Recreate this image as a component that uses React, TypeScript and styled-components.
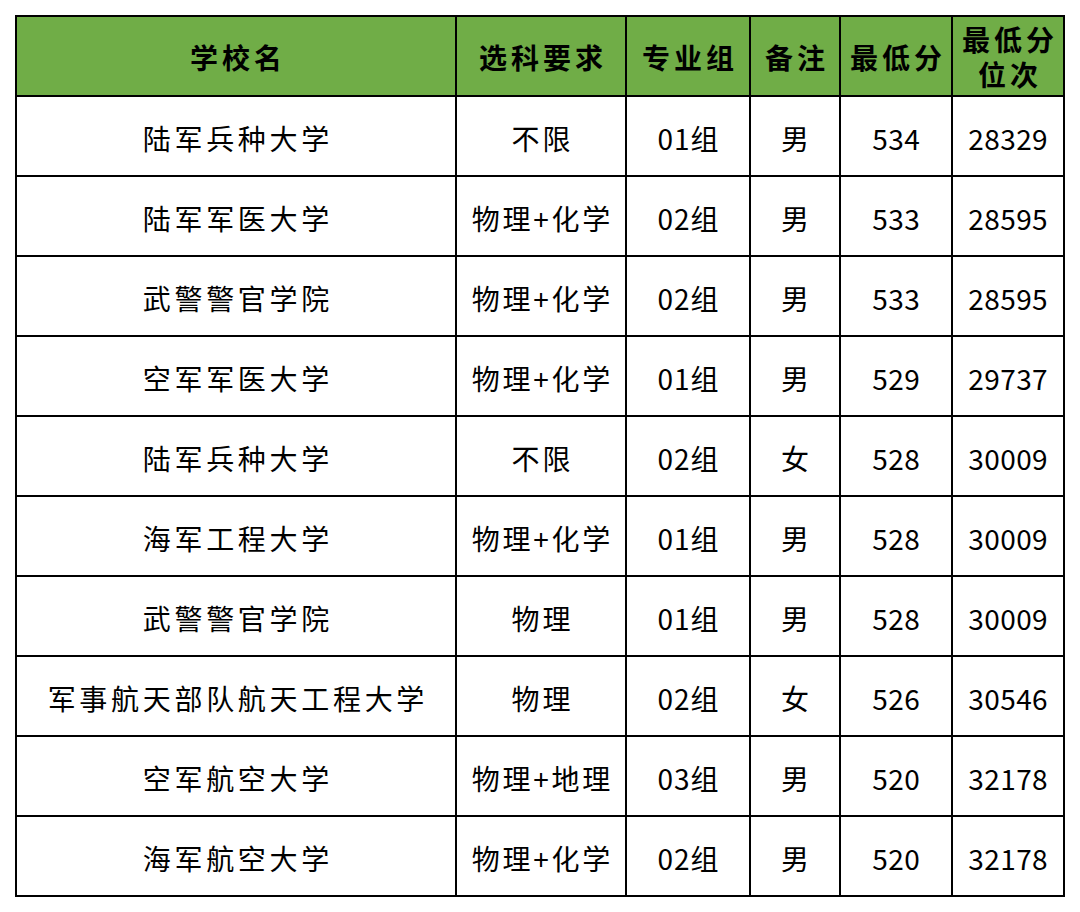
import styled, { createGlobalStyle } from 'styled-components';

const GlobalStyle = createGlobalStyle`
  html, body {
    margin: 0;
    padding: 0;
    background: #ffffff;
  }
  body {
    font-family: 'Noto Sans CJK SC', 'Noto Sans', sans-serif;
    color: #000000;
  }
`;

const Page = styled.div`
  padding: 15px 0 0 15px;
`;

const Table = styled.div`
  display: grid;
  grid-template-columns: 440px 170px 124px 90px 112px 112px;
  grid-auto-rows: 80px;
  width: max-content;
  border-left: 2px solid #000;
  border-top: 2px solid #000;
`;

const HeadCell = styled.div`
  display: flex;
  align-items: center;
  justify-content: center;
  text-align: center;
  background: #70ad47;
  border-right: 2px solid #000;
  border-bottom: 2px solid #000;
  font-size: 28px;
  font-weight: 700;
  letter-spacing: 4px;
  line-height: 35px;
  white-space: pre-line;
  padding: 2px 0 0 4px;
`;

const Cell = styled.div<{ $spacing: number }>`
  display: flex;
  align-items: center;
  justify-content: center;
  border-right: 2px solid #000;
  border-bottom: 2px solid #000;
  font-size: 28px;
  letter-spacing: ${(p) => p.$spacing}px;
  padding: 3px 0 0 ${(p) => p.$spacing}px;
  white-space: nowrap;
`;

const headers = ['学校名', '选科要求', '专业组', '备注', '最低分', '最低分\n位次'];
const spacings = [3.7, 2.8, 1, 3, 0.4, 0.4];

const rows: string[][] = [
  ['陆军兵种大学', '不限', '01组', '男', '534', '28329'],
  ['陆军军医大学', '物理+化学', '02组', '男', '533', '28595'],
  ['武警警官学院', '物理+化学', '02组', '男', '533', '28595'],
  ['空军军医大学', '物理+化学', '01组', '男', '529', '29737'],
  ['陆军兵种大学', '不限', '02组', '女', '528', '30009'],
  ['海军工程大学', '物理+化学', '01组', '男', '528', '30009'],
  ['武警警官学院', '物理', '01组', '男', '528', '30009'],
  ['军事航天部队航天工程大学', '物理', '02组', '女', '526', '30546'],
  ['空军航空大学', '物理+地理', '03组', '男', '520', '32178'],
  ['海军航空大学', '物理+化学', '02组', '男', '520', '32178'],
];

const App = () => (
  <Page>
    <GlobalStyle />
    <Table>
      {headers.map((h) => (
        <HeadCell key={h}>{h}</HeadCell>
      ))}
      {rows.map((row, i) =>
        row.map((value, j) => (
          <Cell key={`${i}-${j}`} $spacing={spacings[j]}>
            {value}
          </Cell>
        ))
      )}
    </Table>
  </Page>
);

export default App;
